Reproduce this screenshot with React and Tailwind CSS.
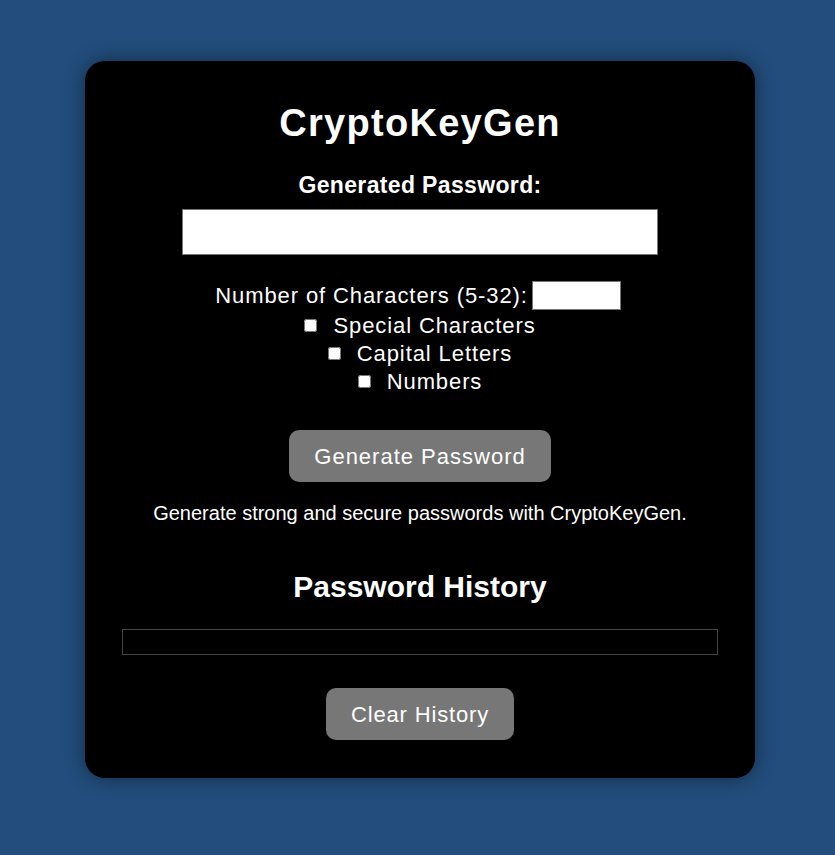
import React, { useState } from 'react';

const App = () => {
    const [length, setLength] = useState('');
    const [password] = useState('');

    return (
        <div className="min-h-screen bg-[#224d7c] pt-[61px] pb-[77px] font-['Liberation_Sans',Arial,sans-serif] text-white">
            <div className="ml-[85px] w-[670px] bg-black rounded-[20px] shadow-[0_0_20px_rgba(0,0,0,0.45)] pt-[40px] pb-[38px] flex flex-col items-center">
                <h1 className="text-[38px] leading-[44px] font-bold tracking-[1.3px]">CryptoKeyGen</h1>

                <label className="mt-[27px] text-[23px] leading-[26px] font-bold tracking-[0.35px]">Generated Password:</label>
                <input
                    type="text"
                    readOnly
                    value={password}
                    className="mt-[11px] w-[476px] h-[46px] bg-white border border-[#767676] text-black px-2 outline-none"
                />

                {/* length input */}
                <div className="mt-[26px] flex items-center h-[29px] pr-[4px]">
                    <span className="text-[22px] leading-[29px] tracking-[0.9px]">Number of Characters (5-32):</span>
                    <input
                        type="number"
                        value={length}
                        onChange={(e) => setLength(e.target.value)}
                        className="ml-[4px] w-[89px] h-[29px] bg-white border border-[#767676] text-black px-1 outline-none"
                    />
                </div>

                <div className="mt-[1px] flex flex-col items-center">
                    {['Special Characters', 'Capital Letters', 'Numbers'].map((item) => (
                        <label key={item} className="flex items-center h-[28px] text-[22px] tracking-[0.9px]">
                            <input type="checkbox" className="w-[13px] h-[13px] mr-[16px]" />
                            {item}
                        </label>
                    ))}
                </div>

                <button className="mt-[35px] w-[262px] h-[52px] bg-[#777777] rounded-[10px] text-[22px] tracking-[1px] text-white">
                    Generate Password
                </button>

                <p className="mt-[19px] text-[20px] leading-[24px]">
                    Generate strong and secure passwords with CryptoKeyGen.
                </p>

                <h2 className="mt-[45px] text-[30px] leading-[34px] font-bold">Password History</h2>

                {/* history list */}
                <div className="mt-[25px] w-[596px] h-[26px] border border-[#444444]"></div>

                <button className="mt-[33px] w-[188px] h-[52px] bg-[#777777] rounded-[10px] text-[22px] tracking-[0.85px] text-white">
                    Clear History
                </button>
            </div>
        </div>
    );
};

export default App;
